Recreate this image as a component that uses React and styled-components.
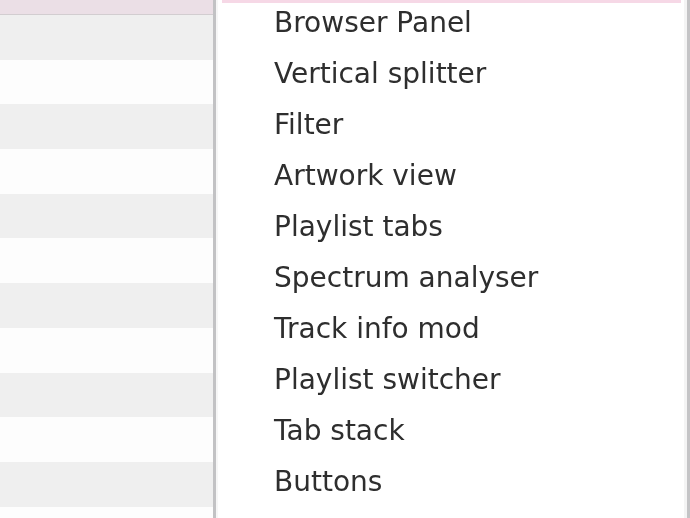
import styled, { createGlobalStyle } from 'styled-components'

const GlobalStyle = createGlobalStyle`
  html, body {
    margin: 0;
    padding: 0;
    background: #ffffff;
  }
  #root {
    width: 690px;
    height: 518px;
    overflow: hidden;
  }
`

const items = [
  'Browser Panel',
  'Vertical splitter',
  'Filter',
  'Artwork view',
  'Playlist tabs',
  'Spectrum analyser',
  'Track info mod',
  'Playlist switcher',
  'Tab stack',
  'Buttons',
  'Horizontal splitter',
]

const App = () => {
  const rows = Array.from({ length: 12 }, (_, i) => i)

  return (
    <>
      <GlobalStyle />
      <Screen>
        <ListPanel>
          <ListHeader />
          {rows.map((i) => (
            <ListRow key={i} odd={i % 2 === 1} />
          ))}
        </ListPanel>
        <Menu>
          <HoverEdge />
          <Items>
            {items.map((label) => (
              <Item key={label}>{label}</Item>
            ))}
          </Items>
        </Menu>
      </Screen>
    </>
  )
}

const Screen = styled.div`
  width: 690px;
  height: 518px;
  display: flex;
  overflow: hidden;
  background: #ffffff;
`

const ListPanel = styled.div`
  width: 213px;
  flex-shrink: 0;
  display: flex;
  flex-direction: column;
  border-right: 3px solid #c2c2c4;
  overflow: hidden;
`

const ListHeader = styled.div`
  height: 14px;
  flex-shrink: 0;
  background: #ebdfe6;
  border-bottom: 1px solid #d2cdd0;
`

const ListRow = styled.div`
  height: 44.7px;
  flex-shrink: 0;
  background: ${(props) => (props.odd ? '#fdfdfd' : '#efefef')};
`

const Menu = styled.div`
  flex: 1;
  display: flex;
  flex-direction: column;
  background: #ffffff;
  border-left: 2px solid #f6f6f6;
  border-right: 3px solid #c4c4c6;
  box-shadow: inset -3px 0 0 #f4f4f4;
  overflow: hidden;
`

const HoverEdge = styled.div`
  height: 3px;
  flex-shrink: 0;
  margin: 0 6px 0 4px;
  background: #f6d8e6;
`

const Items = styled.div`
  display: flex;
  flex-direction: column;
  margin-top: -6px;
  padding-left: 56px;
`

const Item = styled.div`
  height: 51px;
  line-height: 51px;
  font-family: 'DejaVu Sans', Verdana, sans-serif;
  font-size: 28px;
  color: #2e2e2e;
  white-space: nowrap;
  filter: blur(0.6px);
`

export default App
